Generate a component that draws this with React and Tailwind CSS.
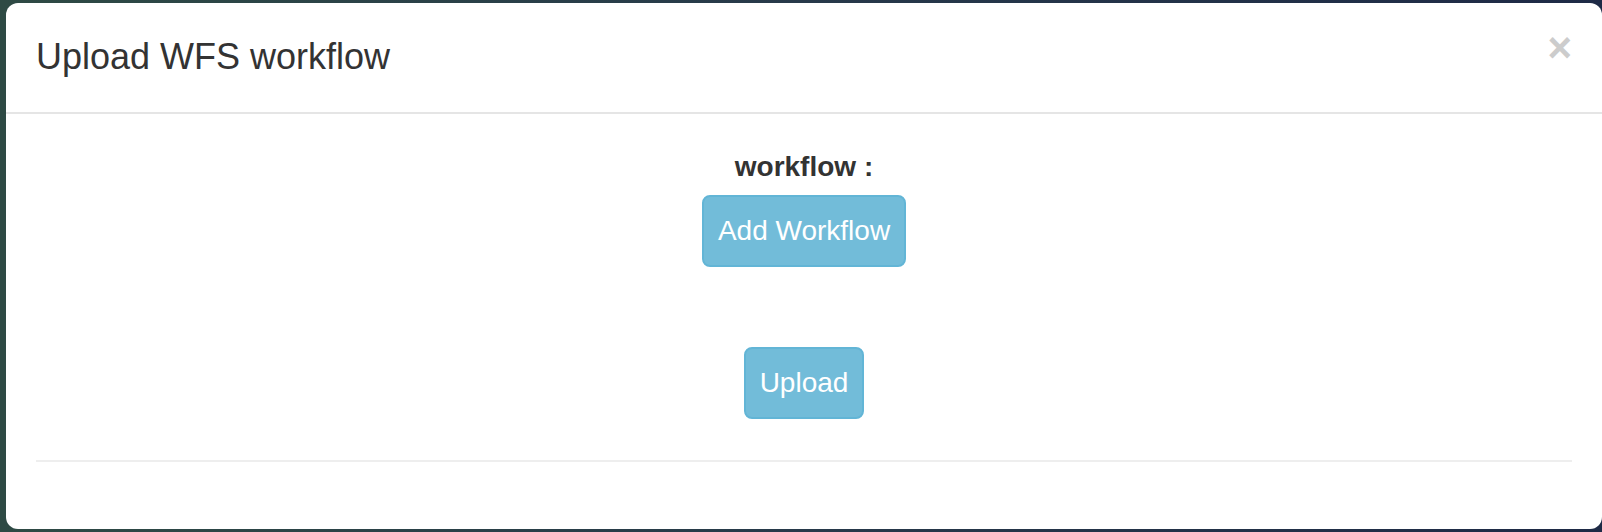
import React from "react";

function App() {
  return (
    <div
      className="w-full h-[532px] flex pl-[6px] pt-[3px] pb-[3px] bg-gradient-to-r from-[#2e4a44] via-[#27394a] to-[#1e2a46]"
      style={{ fontFamily: '"Liberation Sans", Arial, sans-serif' }}
    >
      <div className="flex-1 flex flex-col bg-white rounded-[12px] text-[#333333]">
        {/* Header */}
        <div className="flex justify-between items-start px-[30px] pt-[28px] pb-[30px] border-b-2 border-[#e5e5e5]">
          <h4 className="text-[36px] leading-[51px] font-normal">
            Upload WFS workflow
          </h4>
          <button
            type="button"
            className="-mt-[4px] text-[42px] leading-none font-bold text-[#cccccc]"
          >
            ×
          </button>
        </div>

        {/* Body */}
        <div className="flex flex-col items-center pt-[33px]">
          <label className="text-[28px] leading-[40px] font-bold">
            workflow :
          </label>
          <button
            type="button"
            className="mt-[8px] w-[204px] h-[72px] flex items-center justify-center rounded-[8px] border-2 border-[#62b5d6] bg-[#72bcd9] text-white text-[28px]"
          >
            Add Workflow
          </button>
          <button
            type="button"
            className="mt-[80px] w-[120px] h-[72px] flex items-center justify-center rounded-[8px] border-2 border-[#62b5d6] bg-[#72bcd9] text-white text-[28px]"
          >
            Upload
          </button>
        </div>

        {/* Footer */}
        <div className="mx-[30px] mt-[41px] border-t-2 border-[#eeeeee]" />
      </div>
    </div>
  );
}

export default App;
